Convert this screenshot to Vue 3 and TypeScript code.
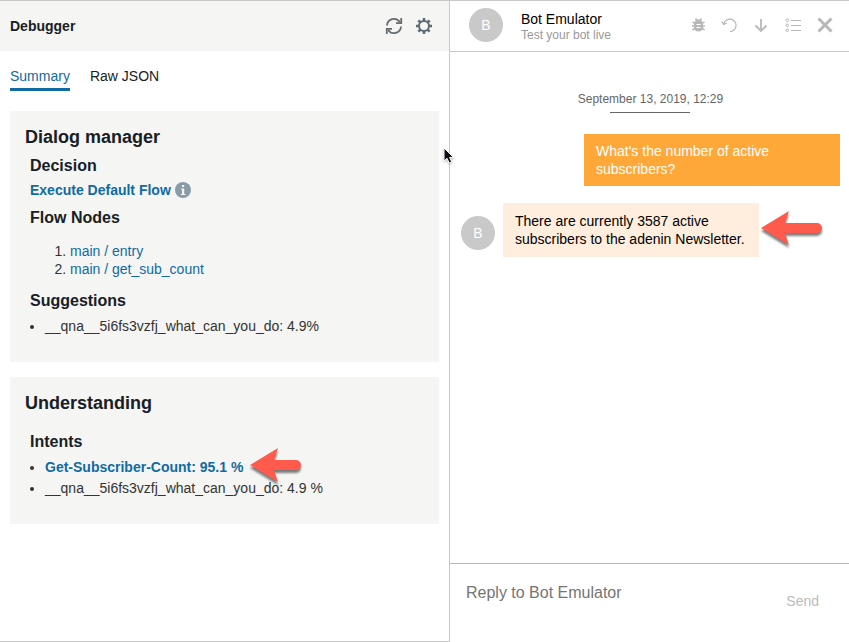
<script setup lang="ts">
import { ref } from 'vue'

interface Entry {
  label: string
  strong?: boolean
}

const flowNodes: string[] = ['main / entry', 'main / get_sub_count']
const suggestions: string[] = ['__qna__5i6fs3vzfj_what_can_you_do: 4.9%']
const intents: Entry[] = [
  { label: 'Get-Subscriber-Count: 95.1 %', strong: true },
  { label: '__qna__5i6fs3vzfj_what_can_you_do: 4.9 %' },
]
const tabs: string[] = ['Summary', 'Raw JSON']
const activeTab = ref('Summary')
const reply = ref('')
const gearTeeth = [0, 45, 90, 135, 180, 225, 270, 315]
</script>

<template>
  <div class="app">
    <section class="debugger">
      <header class="debugger-head">
        <h1>Debugger</h1>
        <div class="head-tools">
          <button type="button" aria-label="Refresh">
            <svg width="18" height="18" viewBox="0 0 18 18" fill="none" stroke="#666b6e" stroke-width="1.800">
              <path d="M2 8.500A7 7 0 0 1 14.800 5M16 9.500A7 7 0 0 1 3.200 13" />
              <path d="M16.200 1v5.200h-5.200M1.800 17v-5.200h5.200" />
            </svg>
          </button>
          <button type="button" aria-label="Settings">
            <svg width="18" height="18" viewBox="0 0 18 18" fill="none" stroke="#5f6c73">
              <circle cx="9" cy="9" r="5" stroke-width="2" />
              <path
                v-for="angle in gearTeeth"
                :key="angle"
                d="M9 1v3"
                stroke-width="2.600"
                :transform="`rotate(${angle} 9 9)`"
              />
            </svg>
          </button>
        </div>
      </header>

      <nav class="tabs">
        <button
          v-for="tab in tabs"
          :key="tab"
          type="button"
          :class="{ active: tab === activeTab }"
          @click="activeTab = tab"
        >{{ tab }}</button>
      </nav>

      <div class="cards">
        <article class="card">
          <h2>Dialog manager</h2>
          <div class="group decision">
            <h3>Decision</h3>
            <p class="flow">
              <a href="#">Execute Default Flow</a>
              <svg width="16" height="16" viewBox="0 0 16 16" aria-hidden="true">
                <circle cx="8" cy="8" r="8" fill="#8a9ba8" />
                <path d="M7 3h2.200v2H7zM6 6.500h3.200V12H10.500v1H5.800v-1H7V7.500H6z" fill="#f5f5f4" />
              </svg>
            </p>
          </div>
          <div class="group nodes">
            <h3>Flow Nodes</h3>
            <ol>
              <li v-for="node in flowNodes" :key="node"><a href="#">{{ node }}</a></li>
            </ol>
          </div>
          <div class="group suggestions">
            <h3>Suggestions</h3>
            <ul>
              <li v-for="item in suggestions" :key="item">{{ item }}</li>
            </ul>
          </div>
        </article>

        <article class="card">
          <h2>Understanding</h2>
          <div class="group intents">
            <h3>Intents</h3>
            <ul>
              <li v-for="intent in intents" :key="intent.label">
                <a v-if="intent.strong" class="top-intent" href="#">
                  {{ intent.label }}
                  <svg class="arrow" width="56" height="42" viewBox="0 0 56 42" aria-hidden="true">
                    <path d="M2 19 30 2 26 14H48a5 5 0 0 1 0 10H26L30 36Z" fill="#ff5b4d" />
                  </svg>
                </a>
                <template v-else>{{ intent.label }}</template>
              </li>
            </ul>
          </div>
        </article>
      </div>

      <svg class="pointer" width="12" height="18" viewBox="0 0 12 18" aria-hidden="true">
        <path d="M1 1V14L4 11.300 6.200 16 8.700 14.800 6.600 10.400H10.500Z" fill="#0b0f12" stroke="#fff" />
      </svg>
    </section>

    <section class="emulator">
      <header class="emulator-head">
        <span class="avatar">B</span>
        <div class="identity">
          <strong>Bot Emulator</strong>
          <span>Test your bot live</span>
        </div>
        <div class="chat-tools">
          <button type="button" aria-label="Debug">
            <svg width="16" height="16" viewBox="0 0 16 16" fill="none" stroke="#b8b8b8">
              <path d="M6 5C6 3 7.200 2.500 9.500 2.500S13 3 13 5Z" fill="#b8b8b8" stroke="none" />
              <path d="M5 5h9v5.500c0 2.600-2 4-4.500 4S5 13.100 5 10.500Z" fill="#b8b8b8" stroke="none" />
              <path d="M6.500 1.500l1.500 1.800M12.500 1.500 11 3.300M3.500 5l3 1.500M15.500 5l-3 1.500M3 9h3M16 9h-3M3.500 13 6 11.200M15.500 13 13 11.200" stroke-width="1.600" />
              <path d="M7.500 7.500h4M7.500 10.500h4" stroke="#fff" />
            </svg>
          </button>
          <button type="button" aria-label="Reset">
            <svg width="16" height="16" viewBox="0 0 16 16" fill="none" stroke="#b8b8b8" stroke-width="1.200">
              <path d="M2.800 7A6.200 6.200 0 1 1 9 14.500M.8 4.500 2.700 7.500 6 6" />
            </svg>
          </button>
          <button type="button" aria-label="Download">
            <svg width="16" height="16" viewBox="0 0 16 16" fill="none" stroke="#b8b8b8" stroke-width="1.800">
              <path d="M8 2v12M2.500 8.500 8 14l5.500-5.500" />
            </svg>
          </button>
          <button type="button" aria-label="Conversations">
            <svg width="16" height="16" viewBox="0 0 16 16" fill="none" stroke="#b8b8b8">
              <rect x="1" y="2" width="2.500" height="2.500" rx="1" />
              <rect x="1" y="7" width="2.500" height="2.500" rx="1" />
              <rect x="1" y="12" width="2.500" height="2.500" rx="1" />
              <path d="M6 3.500h10M6 8.500h10M6 13.500h10" />
            </svg>
          </button>
          <button type="button" aria-label="Close">
            <svg width="16" height="16" viewBox="0 0 16 16" fill="none" stroke="#b8b8b8" stroke-width="3">
              <path d="M1.500 1.500l13 13M14.500 1.500l-13 13" />
            </svg>
          </button>
        </div>
      </header>

      <div class="messages">
        <time>September 13, 2019, 12:29</time>
        <p class="bubble user">What's the number of active subscribers?</p>
        <div class="bot-row">
          <span class="avatar">B</span>
          <p class="bubble bot">
            There are currently 3587 active subscribers to the adenin Newsletter.
            <svg class="arrow" width="66" height="42" viewBox="0 0 66 42" aria-hidden="true">
              <path d="M2 19 30 2 26 14H58a5 5 0 0 1 0 10H26L30 36Z" fill="#ff5b4d" />
            </svg>
          </p>
        </div>
      </div>

      <form class="composer" @submit.prevent>
        <textarea v-model="reply" rows="2" aria-label="Reply" placeholder="Reply to Bot Emulator"></textarea>
        <button type="submit">Send</button>
      </form>
    </section>
  </div>
</template>

<style>
body {
  margin: 0;
  background: #fff;
}
</style>

<style scoped>
.app {
  display: flex;
  box-sizing: border-box;
  min-height: 100vh;
  border-top: 1px solid #c8c8c8;
  font-family: "Liberation Sans", Arial, sans-serif;
  font-size: 14px;
  line-height: 18px;
  color: #333;
}

h1, h2, h3, p, ol, ul {
  margin: 0;
  padding: 0;
}

button {
  padding: 0;
  border: 0;
  background: none;
  font: inherit;
  color: inherit;
  cursor: pointer;
}

button svg {
  display: block;
}

a {
  color: #106ba3;
  text-decoration: none;
}

.debugger {
  position: relative;
  box-sizing: border-box;
  flex: 0 0 53%;
  border-right: 1px solid #c8c8c8;
  border-bottom: 1px solid #c8c8c8;
}

.debugger-head {
  display: flex;
  align-items: center;
  justify-content: space-between;
  height: 50px;
  padding: 0 16px 0 10px;
  background: #f5f5f4;
}

h1 {
  font-size: 14px;
  color: #182026;
}

.head-tools {
  display: flex;
  gap: 12px;
}

.tabs {
  display: flex;
  gap: 20px;
  padding: 16px 10px 20px;
}

.tabs button {
  padding-bottom: 3px;
  border-bottom: 3px solid transparent;
  color: #182026;
}

.tabs button.active {
  border-bottom-color: #106ba3;
  color: #106ba3;
}

.cards {
  display: flex;
  flex-direction: column;
  gap: 15px;
  padding: 0 10px 16px;
}

.card {
  padding: 15px 15px 25px;
  background: #f5f5f4;
}

h2 {
  font-size: 18px;
  line-height: 22px;
  color: #182026;
}

h3 {
  font-size: 16px;
  line-height: 18px;
  color: #182026;
}

.group {
  padding-left: 5px;
}

.decision {
  margin-top: 9px;
}

.flow {
  display: flex;
  align-items: center;
  gap: 4px;
  margin-top: 6px;
  font-weight: bold;
}

.nodes {
  margin-top: 10px;
}

ol {
  margin-top: 15px;
  padding-left: 40px;
}

.suggestions {
  margin-top: 14px;
}

.intents {
  margin-top: 19px;
}

ul {
  margin-top: 6px;
  padding-left: 15px;
  line-height: 21px;
}

.top-intent {
  position: relative;
  font-weight: bold;
}

.arrow {
  position: absolute;
  filter: drop-shadow(0 3px 1px rgba(0, 0, 0, 0.5));
}

.top-intent .arrow {
  top: -13px;
  left: calc(100% + 5px);
}

.pointer {
  position: absolute;
  top: 146px;
  right: -6px;
  z-index: 1;
  filter: drop-shadow(0 1px 1px rgba(0, 0, 0, 0.3));
}

.emulator {
  display: flex;
  flex: 1;
  flex-direction: column;
  min-width: 0;
}

.emulator-head {
  display: flex;
  align-items: center;
  height: 50px;
  padding: 0 16px 0 19px;
  border-bottom: 1px solid #c8c8c8;
}

.avatar {
  display: flex;
  flex: none;
  align-items: center;
  justify-content: center;
  width: 34px;
  height: 34px;
  border-radius: 50%;
  background: #c9c9c9;
  color: #fff;
}

.emulator-head .avatar {
  margin-bottom: 3px;
}

.identity {
  display: flex;
  flex: 1;
  flex-direction: column;
  margin-left: 18px;
  padding-top: 2px;
  font-size: 12px;
  line-height: 16px;
  color: #999;
}

.identity strong {
  font-size: 14px;
  font-weight: normal;
  color: #000;
}

.chat-tools {
  display: flex;
  gap: 16px;
  padding-bottom: 3px;
}

.messages {
  display: flex;
  flex: 1;
  flex-direction: column;
  padding: 38px 9px 16px 11px;
}

time {
  align-self: center;
  font-size: 12px;
  color: #666;
}

time::after {
  content: "";
  display: block;
  width: 80px;
  margin: 4px auto 0;
  border-top: 1px solid #666;
}

.bubble {
  position: relative;
  box-sizing: border-box;
  width: 256px;
  padding: 9px 12px;
}

.user {
  align-self: flex-end;
  margin-top: 21px;
  padding: 8px 12px;
  background: #ffa83a;
  color: #fff;
}

.bot-row {
  display: flex;
  align-items: flex-end;
  gap: 8px;
  margin-top: 17px;
}

.bot-row .avatar {
  margin-bottom: 7px;
}

.bot {
  background: #ffeedd;
  color: #000;
}

.bubble .arrow {
  top: 6px;
  left: 100%;
}

.composer {
  display: flex;
  align-items: center;
  height: 78px;
  padding-right: 30px;
  border-top: 1px solid #b8b8b8;
}

textarea {
  flex: 1;
  min-width: 0;
  padding: 0 16px;
  border: 0;
  outline: 0;
  resize: none;
  background: none;
  font: inherit;
  font-size: 16px;
  line-height: 20px;
  color: #333;
}

textarea::placeholder {
  color: #757575;
}

.composer button {
  padding-bottom: 4px;
  color: #bbb;
}
</style>
